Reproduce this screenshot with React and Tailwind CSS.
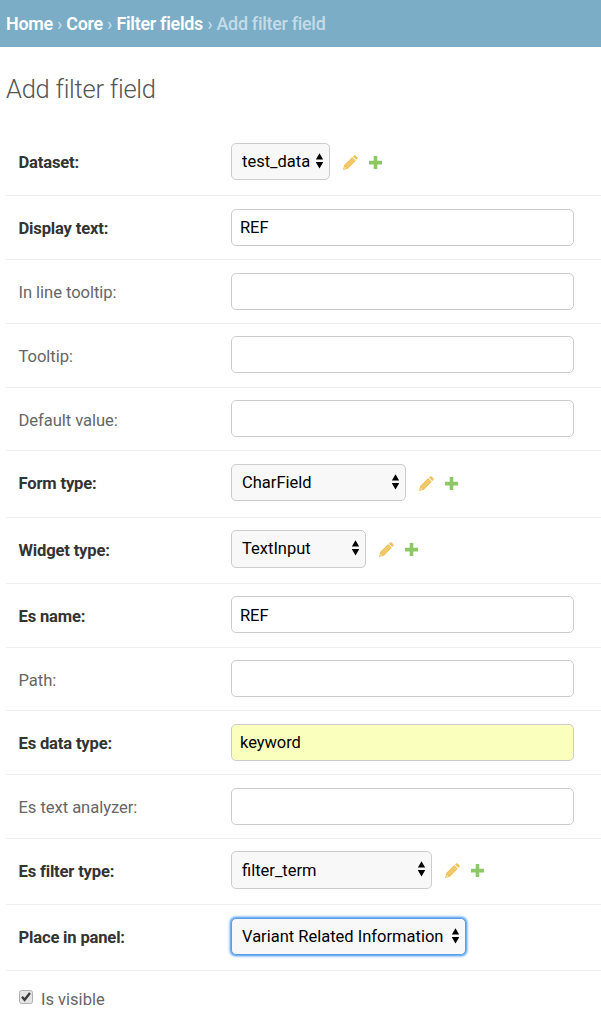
import React from 'react';

const rows = [
  { label: 'Dataset:', bold: true, kind: 'select', value: 'test_data', row: 'h-[67px] pt-[14px]', box: 'h-[37px] w-[99px]', links: true, inset: 'pt-[2px]' },
  { label: 'Display text:', bold: true, value: 'REF', row: 'h-[64px] pt-[13px]' },
  { label: 'In line tooltip:', value: '', row: 'h-[64px] pt-[13px]' },
  { label: 'Tooltip:', value: '', row: 'h-[64px] pt-[12px]', drop: true },
  { label: 'Default value:', value: '', row: 'h-[63px] pt-[12px]', drop: true },
  { label: 'Form type:', bold: true, kind: 'select', value: 'CharField', row: 'h-[67px] pt-[13px]', box: 'h-[37px] w-[175px]', links: true, inset: 'pt-[2px]' },
  { label: 'Widget type:', bold: true, kind: 'select', value: 'TextInput', row: 'h-[66px] pt-[12px]', box: 'h-[38px] w-[135px]', links: true, drop: true },
  { label: 'Es name:', bold: true, value: 'REF', row: 'h-[64px] pt-[12px]', drop: true, inset: 'pt-[2px]' },
  { label: 'Path:', value: '', row: 'h-[63px] pt-[12px]', drop: true },
  { label: 'Es data type:', bold: true, value: 'keyword', row: 'h-[64px] pt-[13px]', fill: 'bg-[#faffbd]' },
  { label: 'Es text analyzer:', value: '', row: 'h-[64px] pt-[13px]' },
  { label: 'Es filter type:', bold: true, kind: 'select', value: 'filter_term', row: 'h-[66px] pt-[12px]', box: 'h-[38px] w-[201px]', links: true, drop: true, inset: 'pt-[2px]' },
  { label: 'Place in panel:', bold: true, kind: 'select', value: 'Variant Related Information', row: 'h-[66px] pt-[13px]', box: 'h-[37px] w-[235px]', focused: true, inset: 'pt-[2px]' },
];

function Pencil() {
  return (
    <svg className="ml-[13px] mt-[12px] h-[15px] w-[15px] shrink-0" viewBox="0 0 15 15" fill="#efc35b">
      <path d="M9.9 1.5 11.1.5Q11.9-.1 12.7.6L14.3 2.2Q15 3 14.4 3.8L13.4 5Z" />
      <path d="M9.2 2.1 12.8 5.7 4.9 13.7 0 15 1.2 10.1ZM1.9 11.9 1.3 13.7 3.1 13.1Z" fillRule="evenodd" />
      <path d="M3.2 10.6 9.9 3.9M4.3 11.8 11.1 5" stroke="#f8dfa4" strokeWidth=".5" fill="none" />
      <path d="M9.5 1.7 13.2 5.4" stroke="#fff" strokeWidth=".5" fill="none" />
    </svg>
  );
}

function Plus() {
  return (
    <svg className="ml-[11px] mt-[13px] h-[13px] w-[13px] shrink-0" viewBox="0 0 13 13" fill="#8cc966">
      <path d="M4.7 0H8.3V4.8H13V8.4H8.3V13H4.7V8.4H0V4.8H4.7Z" />
    </svg>
  );
}

function SelectBox({ value, box, focused, inset = '' }) {
  return (
    <div className={`relative shrink-0 ${box}`}>
      <select
        defaultValue={value}
        className={`block h-full w-full appearance-none rounded-[5px] border bg-[#f8f8f8] pl-[10px] text-[16.5px] text-black outline-none ${inset} ${
          focused ? 'border-[#5b9ce6] shadow-[0_0_0_1px_#75b2f3,0_0_2px_2px_#a0cbf8]' : 'border-[#ccc]'
        }`}
      >
        <option>{value}</option>
      </select>
      <svg className="pointer-events-none absolute right-[7px] top-[10px] h-[16px] w-[7px]" viewBox="0 0 7 16">
        <path d="M3.5 .3 7.2 6.6H-.2ZM-.2 9.1H7.2L3.5 15.4Z" fill="#000" />
      </svg>
    </div>
  );
}

function Field({ label, bold, kind, value, row, box, links, fill = 'bg-white', focused, drop, inset = '' }) {
  return (
    <div className={`flex items-start border-b border-[#eee] pl-[12.5px] ${row}`}>
      <label
        className={`h-[37px] w-[212.5px] shrink-0 text-[16.6px] ${drop ? 'leading-[42px]' : 'leading-[40px]'} ${
          bold ? 'font-bold tracking-[-0.18px] text-[#333]' : 'tracking-[-0.06px] text-[#666]'
        }`}
      >
        {label}
      </label>
      {kind === 'select' ? (
        <SelectBox value={value} box={box} focused={focused} inset={inset} />
      ) : (
        <input
          type="text"
          defaultValue={value}
          className={`h-[37px] w-[343px] rounded-[5px] border border-[#ccc] pl-[8px] text-[16.5px] tracking-[-0.05px] text-black outline-none ${fill} ${inset}`}
        />
      )}
      {links && <Pencil />}
      {links && <Plus />}
    </div>
  );
}

export default function App() {
  return (
    <div className="h-[1024px] w-[601px] overflow-hidden bg-white font-['Roboto',sans-serif]">
      <nav className="h-[47px] whitespace-pre bg-[#7badc7] pl-[6px] text-[17.9px] font-medium leading-[48px] tracking-[-0.27px] text-[#c4dce8]">
        <span className="font-semibold tracking-[-0.28px] text-white">Home</span> ›{' '}
        <span className="font-semibold tracking-[-0.28px] text-white">Core</span> ›{' '}
        <span className="font-semibold tracking-[-0.28px] text-white">Filter fields</span> › Add filter field
      </nav>
      <h1 className="h-[82px] pl-[6px] pt-[27px] text-[25.5px] font-light leading-[30px] tracking-[-0.26px] text-[#555]">
        Add filter field
      </h1>
      <form className="pl-[6px]">
        {rows.map((r) => (
          <Field key={r.label} {...r} />
        ))}
        <label className="flex items-start pl-[13px] pt-[19px] text-[16.5px] text-[#666]">
          <svg className="h-[15px] w-[14px]" viewBox="0 0 14 15">
            <rect x=".5" y=".5" width="13" height="13" rx="2" fill="#e4e4e4" stroke="#b0b0b0" />
            <path d="M3 6.8 5.6 9.8 11 3" fill="none" stroke="#3c3c3c" strokeWidth="2.4" />
          </svg>
          <span className="ml-[8px] leading-[20px]">Is visible</span>
        </label>
      </form>
    </div>
  );
}
